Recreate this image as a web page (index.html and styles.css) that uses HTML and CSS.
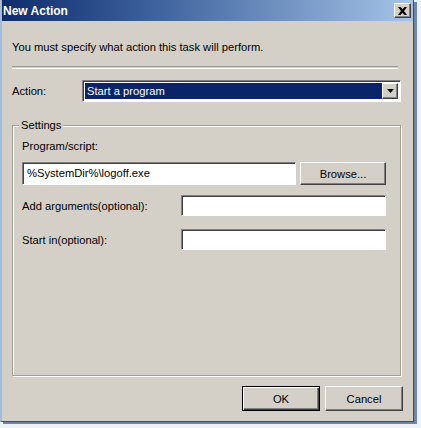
FILE: index.html
```html
<!DOCTYPE html>
<html>
<head>
<meta charset="utf-8">
<link rel="stylesheet" href="styles.css">
</head>
<body>
<div class="frame">
  <div class="window">
    <div class="titlebar">
      <span class="title">New Action</span>
      <span class="close-btn">
        <svg width="9" height="8" viewBox="0 0 9 8"><path d="M0 0h2.5l2 2.2 2-2.2H9L6 4l3 4H6.5l-2-2.2-2 2.2H0l3-4z" fill="#000"/></svg>
      </span>
    </div>
    <div class="content">
      <p class="intro">You must specify what action this task will perform.</p>
      <div class="separator"></div>
      <div class="action-row">
        <span class="label action-label">Action:</span>
        <div class="combo">
          <span class="combo-value">Start a program</span>
          <span class="combo-arrow">
            <svg width="7" height="4" viewBox="0 0 7 4"><path d="M0 0h7L3.5 4z" fill="#000"/></svg>
          </span>
        </div>
      </div>
      <fieldset class="group">
        <legend class="legend">Settings</legend>
        <div class="group-body">
          <span class="label">Program/script:</span>
          <div class="program-row">
            <div class="textbox program-box">%SystemDir%\logoff.exe</div>
            <div class="button browse">Browse...</div>
          </div>
          <div class="field-row">
            <span class="label">Add arguments(optional):</span>
            <div class="textbox small-box"></div>
          </div>
          <div class="field-row">
            <span class="label">Start in(optional):</span>
            <div class="textbox small-box"></div>
          </div>
        </div>
      </fieldset>
      <div class="buttons">
        <div class="button default">OK</div>
        <div class="button">Cancel</div>
      </div>
    </div>
  </div>
</div>
</body>
</html>
```
FILE: styles.css
```css
html, body {
  margin: 0;
  padding: 0;
  background: #eef1f6;
}
body {
  font-family: "Liberation Sans", Arial, sans-serif;
  font-size: 11.2px;
  color: #000;
}
.frame {
  width: 421px;
  height: 428px;
  overflow: hidden;
}
.window {
  width: 411px;
  height: 421px;
  background: #d4d0c8;
  border-left: 2px solid #a4bcdc;
  border-right: 1px solid #3c4a64;
  border-bottom: 1px solid #3c4a64;
  box-shadow: 3px 2px 0 #6e86aa;
  display: flex;
  flex-direction: column;
}
.titlebar {
  height: 21px;
  flex: none;
  display: flex;
  align-items: center;
  justify-content: space-between;
  background: linear-gradient(to right, #0e2b6c 0%, #3a5f9a 35%, #a6c4e8 100%);
  padding: 0 2px 0 0;
}
.title {
  color: #fff;
  font-weight: bold;
  font-size: 12px;
  padding-left: 1px;
}
.close-btn {
  width: 15px;
  height: 13px;
  background: #d4d0c8;
  border-top: 1px solid #fff;
  border-left: 1px solid #fff;
  border-right: 1px solid #404040;
  border-bottom: 1px solid #404040;
  box-shadow: inset -1px -1px 0 #808080;
  display: flex;
  align-items: center;
  justify-content: center;
}
.content {
  flex: 1;
  display: flex;
  flex-direction: column;
  padding: 0 12px 0 10px;
}
.intro {
  margin: 19px 0 0 0;
  line-height: 14px;
}
.separator {
  height: 1px;
  border-top: 1px solid #9a9890;
  border-bottom: 1px solid #fff;
  margin-top: 12px;
  margin-right: 3px;
}
.action-row {
  margin-top: 11px;
  display: flex;
  align-items: center;
}
.action-label {
  width: 70px;
}
.combo {
  flex: 1;
  height: 16px;
  display: flex;
  align-items: center;
  padding: 2px;
  background: #fff;
  border-top: 1px solid #808080;
  border-left: 1px solid #808080;
  border-right: 1px solid #fff;
  border-bottom: 1px solid #fff;
  box-shadow: inset 1px 1px 0 #404040;
}
.combo-value {
  flex: 1;
  height: 16px;
  line-height: 16px;
  background: #0b2468;
  color: #fff;
  padding-left: 2px;
}
.combo-arrow {
  width: 14px;
  height: 14px;
  background: #d4d0c8;
  border-top: 1px solid #fff;
  border-left: 1px solid #fff;
  border-right: 1px solid #404040;
  border-bottom: 1px solid #404040;
  box-shadow: inset -1px -1px 0 #808080;
  display: flex;
  align-items: center;
  justify-content: center;
}
.group {
  margin: 16px 0 0 0;
  padding: 0;
  height: 256px;
  border: 1px solid #a09e98;
  box-shadow: inset 1px 1px 0 #fff, 1px 1px 0 #fff;
}
.legend {
  margin-left: 6px;
  padding: 0 2px;
  background: #d4d0c8;
  line-height: 14px;
}
.group-body {
  padding: 8px 14px 0 9px;
  display: flex;
  flex-direction: column;
}
.program-row {
  margin-top: 10px;
  display: flex;
  justify-content: space-between;
}
.textbox {
  height: 19px;
  line-height: 19px;
  background: #fff;
  border-top: 1px solid #808080;
  border-left: 1px solid #808080;
  border-right: 1px solid #fff;
  border-bottom: 1px solid #fff;
  box-shadow: inset 1px 1px 0 #404040;
  padding: 0 4px;
  box-sizing: content-box;
}
.program-box {
  width: 264px;
  height: 21px;
  line-height: 21px;
}
.browse {
  width: 86px;
}
.field-row {
  margin-top: 10px;
  display: flex;
  justify-content: space-between;
  align-items: center;
}
.field-row + .field-row {
  margin-top: 13px;
}
.small-box {
  width: 195px;
}
.button {
  height: 23px;
  box-sizing: border-box;
  display: flex;
  align-items: center;
  justify-content: center;
  background: #d4d0c8;
  border-top: 1px solid #fff;
  border-left: 1px solid #fff;
  border-right: 1px solid #404040;
  border-bottom: 1px solid #404040;
  box-shadow: inset -1px -1px 0 #808080;
}
.buttons {
  margin-top: 10px;
  margin-right: -2px;
  display: flex;
  justify-content: flex-end;
  gap: 5px;
}
.buttons .button {
  width: 78px;
  height: 25px;
}
.button.default {
  border: 1px solid #000;
  box-shadow: inset 1px 1px 0 #fff, inset -1px -1px 0 #404040, inset -2px -2px 0 #808080;
}
```
